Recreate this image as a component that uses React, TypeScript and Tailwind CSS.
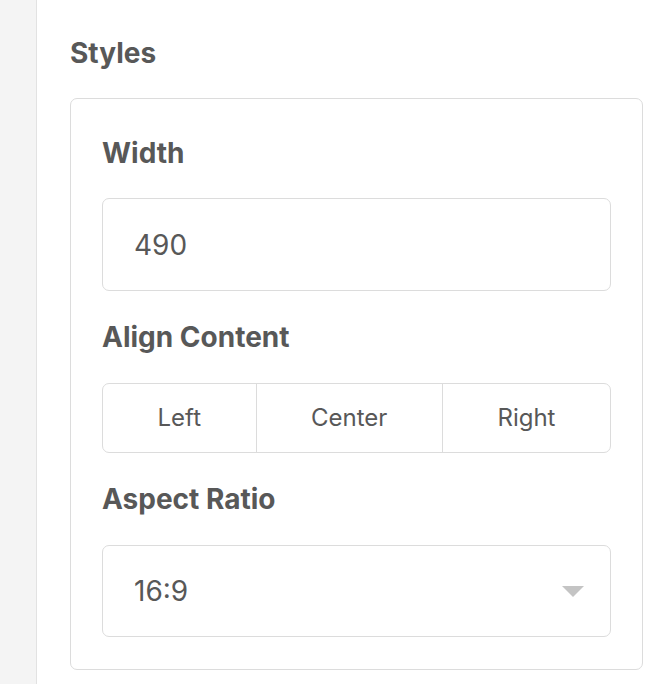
export default function App() {
  const segments = ['Left', 'Center', 'Right'];

  return (
    <div
      className="flex min-h-[684px] w-full bg-white text-[#585858]"
      style={{ fontFamily: 'Inter, "Open Sans", sans-serif' }}
    >
      {/* left rail */}
      <div className="w-[37px] shrink-0 border-r border-[#e2e2e2] bg-[#f4f4f4]" />

      <div className="flex-1 pl-[33px] pr-[11px] pt-[30px]">
        <div className="flex h-[46px] items-center text-[28px] font-bold">Styles</div>

        <div className="mt-[22px] rounded-[7px] border border-[#dcdcdc] px-[31px] pb-[32px] pt-[31px]">
          <div className="flex h-[46px] items-center text-[28px] font-bold">Width</div>
          <div className="mt-[22px] flex h-[93px] items-center rounded-[7px] border border-[#dcdcdc] px-[31px] text-[28px]">
            490
          </div>

          <div className="mt-[23px] flex h-[46px] items-center text-[28px] font-bold">Align Content</div>
          <div className="mt-[23px] flex h-[70px] overflow-hidden rounded-[7px] border border-[#dcdcdc]">
            {segments.map((s, i) => (
              <div
                key={s}
                className={
                  'flex flex-auto items-center justify-center text-[24px] ' +
                  (i > 0 ? 'border-l border-[#dcdcdc]' : '')
                }
              >
                {s}
              </div>
            ))}
          </div>

          <div className="mt-[23px] flex h-[46px] items-center text-[28px] font-bold">Aspect Ratio</div>
          <div className="mt-[23px] flex h-[92px] items-center justify-between rounded-[7px] border border-[#dcdcdc] pl-[31px] pr-[26px] text-[28px]">
            <span>16:9</span>
            <span className="h-0 w-0 border-x-[11px] border-t-[11px] border-x-transparent border-t-[#c4c4c4]" />
          </div>
        </div>
      </div>
    </div>
  );
}
